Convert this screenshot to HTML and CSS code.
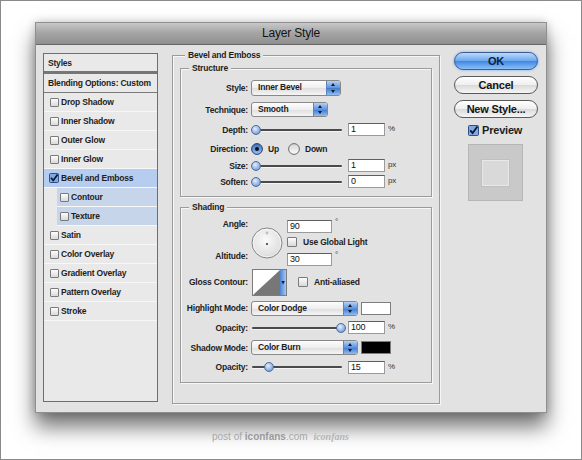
FILE: index.html
```html
<!DOCTYPE html>
<html lang="en">
<head>
  <meta charset="UTF-8" />
  <title>Layer Style</title>
  <link rel="stylesheet" href="styles.css">
</head>
<body>

<div class="frame">
  <div class="window">
    <div class="titlebar">Layer Style</div>

    <div class="content">

      <!-- effect list on the left -->
      <ul class="style-list">
        <li class="head">Styles</li>
        <li class="blend">Blending Options: Custom</li>
        <li><span class="cb"></span>Drop Shadow</li>
        <li><span class="cb"></span>Inner Shadow</li>
        <li><span class="cb"></span>Outer Glow</li>
        <li><span class="cb"></span>Inner Glow</li>
        <li class="selected">
          <svg class="cb-on" width="10" height="10" viewBox="0 0 10 10"><rect x=".5" y=".5" width="9" height="9" rx="1" fill="#7fa9e4" stroke="#2f4f85"/><path d="M2 4.8l2.2 2.6L8.6 1.4" fill="none" stroke="#0d1830" stroke-width="1.7"/></svg>Bevel and Emboss
        </li>
        <li class="sub"><span class="cb"></span>Contour</li>
        <li class="sub"><span class="cb"></span>Texture</li>
        <li><span class="cb"></span>Satin</li>
        <li><span class="cb"></span>Color Overlay</li>
        <li><span class="cb"></span>Gradient Overlay</li>
        <li><span class="cb"></span>Pattern Overlay</li>
        <li><span class="cb"></span>Stroke</li>
      </ul>

      <!-- bevel settings -->
      <div class="group outer">
        <span class="group-title">Bevel and Emboss</span>

        <div class="group structure">
          <span class="group-title inner-title">Structure</span>

          <label>Style:</label>
          <div class="ctl"><div class="select w-style"><span>Inner Bevel</span><i class="stepper"></i></div></div>

          <label>Technique:</label>
          <div class="ctl"><div class="select w-tech"><span>Smooth</span><i class="stepper"></i></div></div>

          <label>Depth:</label>
          <div class="ctl">
            <div class="slider"><i class="thumb" style="--pos:0"></i></div>
            <span class="field">1</span><span class="unit">%</span>
          </div>

          <label>Direction:</label>
          <div class="ctl">
            <svg class="radio" width="12" height="12" viewBox="0 0 12 12"><defs><linearGradient id="rOn" x1="0" y1="0" x2="0" y2="1"><stop offset="0" stop-color="#3c6db5"/><stop offset="1" stop-color="#9cc3f2"/></linearGradient></defs><circle cx="6" cy="6" r="5.4" fill="url(#rOn)" stroke="#1f3d70"/><circle cx="6" cy="6" r="2" fill="#0a1226"/></svg>
            <span class="radio-text">Up</span>
            <svg class="radio second" width="12" height="12" viewBox="0 0 12 12"><defs><linearGradient id="rOff" x1="0" y1="0" x2="0" y2="1"><stop offset="0" stop-color="#d4d4d4"/><stop offset="1" stop-color="#fbfbfb"/></linearGradient></defs><circle cx="6" cy="6" r="5.4" fill="url(#rOff)" stroke="#6c6c6c"/></svg>
            <span class="radio-text">Down</span>
          </div>

          <label>Size:</label>
          <div class="ctl">
            <div class="slider"><i class="thumb" style="--pos:0"></i></div>
            <span class="field">1</span><span class="unit">px</span>
          </div>

          <label>Soften:</label>
          <div class="ctl">
            <div class="slider"><i class="thumb" style="--pos:0"></i></div>
            <span class="field">0</span><span class="unit">px</span>
          </div>
        </div>

        <div class="group shading">
          <span class="group-title inner-title">Shading</span>

          <div class="label-stack"><label>Angle:</label><label>Altitude:</label></div>
          <div class="ctl angle-ctl">
            <svg class="dial" width="32" height="32" viewBox="0 0 32 32">
              <defs>
                <radialGradient id="dialFill" cx="0.45" cy="0.4" r="0.7"><stop offset="0" stop-color="#fafafa"/><stop offset="0.7" stop-color="#e2e2e2"/><stop offset="1" stop-color="#bdbdbd"/></radialGradient>
              </defs>
              <circle cx="16" cy="16" r="15" fill="url(#dialFill)" stroke="#858585"/>
              <circle cx="16" cy="16" r="13.8" fill="none" stroke="#ffffff" stroke-opacity=".7"/>
              <path d="M16 4.5v3M14.6 6h2.8" stroke="#b0b0b0" stroke-width="1"/>
              <circle cx="16" cy="17" r="1.1" fill="#3a3a3a"/>
            </svg>
            <div class="angle-fields">
              <div class="ctl"><span class="field wide">90</span><span class="unit deg">°</span></div>
              <div class="ctl check-line"><span class="cb big"></span>Use Global Light</div>
              <div class="ctl"><span class="field wide">30</span><span class="unit deg">°</span></div>
            </div>
          </div>

          <label>Gloss Contour:</label>
          <div class="ctl">
            <svg class="contour" width="35" height="27" viewBox="0 0 35 27">
              <defs><linearGradient id="strip" x1="0" y1="0" x2="1" y2="0"><stop offset="0" stop-color="#4a83d4"/><stop offset="1" stop-color="#a5c9f3"/></linearGradient></defs>
              <rect x=".5" y=".5" width="34" height="26" fill="#fff" stroke="#7c7c7c"/>
              <path d="M1 26L28 1V26Z" fill="#777"/>
              <rect x="28" y="1" width="6" height="25" fill="url(#strip)"/>
              <path d="M29.4 12h3.4L31.1 15.6Z" fill="#101a2e"/>
            </svg>
            <span class="cb big anti"></span><span class="check-text">Anti-aliased</span>
          </div>

          <label>Highlight Mode:</label>
          <div class="ctl">
            <div class="select w-mode"><span>Color Dodge</span><i class="stepper"></i></div>
            <span class="swatch white"></span>
          </div>

          <label>Opacity:</label>
          <div class="ctl">
            <div class="slider"><i class="thumb" style="--pos:100"></i></div>
            <span class="field">100</span><span class="unit">%</span>
          </div>

          <label>Shadow Mode:</label>
          <div class="ctl">
            <div class="select w-mode"><span>Color Burn</span><i class="stepper"></i></div>
            <span class="swatch black"></span>
          </div>

          <label>Opacity:</label>
          <div class="ctl">
            <div class="slider"><i class="thumb" style="--pos:15"></i></div>
            <span class="field">15</span><span class="unit">%</span>
          </div>
        </div>
      </div>

      <!-- dialog buttons and preview -->
      <div class="actions">
        <button class="btn primary">OK</button>
        <button class="btn">Cancel</button>
        <button class="btn">New Style...</button>
        <div class="preview-line">
          <svg width="11" height="11" viewBox="0 0 11 11"><rect x=".5" y=".5" width="10" height="10" rx="1" fill="#7fa9e4" stroke="#2f4f85"/><path d="M2.2 5.3l2.4 2.8L9.4 1.4" fill="none" stroke="#0d1830" stroke-width="1.8"/></svg>
          Preview
        </div>
        <div class="preview-box"><div class="preview-square"></div></div>
      </div>

    </div>
  </div>

  <div class="credit">post of <b>iconfans</b>.com <span class="logo">iconfans</span></div>
</div>

</body>
</html>
```

FILE: styles.css
```css
body {
  margin: 0;
  font-family: 'Liberation Sans', Arial, sans-serif;
  color: #1e1e1e;
}

.frame {
  width: 582px;
  height: 460px;
  box-sizing: border-box;
  border: 1px solid #8a8a8a;
  background: #fff;
  padding: 21px 0 0 34px;
  overflow: hidden;
}

.window {
  width: 512px;
  height: 391px;
  box-sizing: border-box;
  border: 1px solid #8f8f8f;
  background: #e2e2e2;
  box-shadow: 0 14px 20px rgba(0,0,0,0.55), 0 0 9px rgba(0,0,0,0.2);
}

.titlebar {
  height: 21px;
  line-height: 21px;
  border-bottom: 1px solid #666;
  background: linear-gradient(#c8c8c8, #a6a6a6 45%, #8f8f8f);
  text-align: center;
  font-size: 12px;
  letter-spacing: -0.2px;
  color: #141414;
}

.content {
  display: flex;
  align-items: flex-start;
  padding-left: 7px;
}

/* ---- effect list ---- */

.style-list {
  list-style: none;
  margin: 8px 0 0;
  padding: 0;
  width: 115px;
  height: 349px;
  box-sizing: border-box;
  border: 1px solid #6e6e6e;
  background: #e9e9e9;
  font-size: 8.5px;
  font-weight: bold;
  letter-spacing: -0.2px;
}

.style-list li {
  height: 18px;
  border-bottom: 1px solid #f7f7f7;
  display: flex;
  align-items: center;
  padding-left: 6px;
  white-space: nowrap;
}

.style-list .head {
  height: 17px;
  padding-left: 4px;
  border-bottom: 3px solid #767676;
}

.style-list .blend {
  padding-left: 4px;
  border-bottom: 1px solid #7a7a7a;
}

.style-list .selected {
  background: #b6cdef;
}

.style-list .sub {
  margin-left: 13px;
  padding-left: 3px;
  background: #c7d5ea;
}

.cb {
  display: inline-block;
  width: 7px;
  height: 7px;
  border: 1px solid #7a7a7a;
  border-radius: 1px;
  background: linear-gradient(#fdfdfd, #d9d9d9);
  margin-right: 2px;
  flex: none;
}

.cb.big {
  width: 8px;
  height: 8px;
}

.cb-on {
  margin-right: 2px;
  margin-left: -1px;
  flex: none;
}

/* ---- group boxes ---- */

.group {
  position: relative;
  box-sizing: border-box;
  border: 1px solid #9b9b9b;
  box-shadow: inset 1px 1px 0 #f7f7f7, 1px 1px 0 #f7f7f7;
}

.group-title {
  position: absolute;
  top: -6px;
  left: 12px;
  padding: 0 3px;
  background: #e2e2e2;
  font-size: 8.5px;
  font-weight: bold;
  line-height: 11px;
  letter-spacing: -0.2px;
}

.group-title.inner-title {
  left: 8px;
}

.outer {
  margin: 10px 0 0 14px;
  width: 268px;
  height: 349px;
  padding: 12px 7px 0;
}

.structure,
.shading {
  display: grid;
  grid-template-columns: 67px auto;
  column-gap: 3px;
  align-items: center;
}

.structure {
  height: 129px;
  padding-top: 8px;
  grid-template-rows: 22px 21px 19px 19px 15px 17px;
}

.shading {
  margin-top: 10px;
  height: 176px;
  padding-top: 11px;
  grid-template-rows: 46px 34px 18px 21px 19px 20px;
}

.structure label,
.shading label {
  text-align: right;
  font-size: 8.5px;
  font-weight: bold;
  letter-spacing: -0.2px;
  white-space: nowrap;
  color: #222;
}

.ctl {
  display: flex;
  align-items: center;
  font-size: 8.5px;
  font-weight: bold;
  letter-spacing: -0.2px;
  white-space: nowrap;
}

/* popup menus */
.select {
  display: flex;
  align-items: stretch;
  height: 15px;
  box-sizing: border-box;
  border: 1px solid #888;
  border-radius: 3px;
  background: linear-gradient(#fdfdfd, #eeeeee 50%, #dedede 51%, #f5f5f5);
  overflow: hidden;
}

.select span {
  flex: 1;
  padding-left: 6px;
  line-height: 13px;
  font-weight: bold;
}

.stepper {
  width: 13px;
  border-left: 1px solid #5e82b9;
  background: linear-gradient(#b3d1f5, #5c93dd 50%, #3f7ad0 51%, #8fbdf1);
  position: relative;
}

.stepper::before,
.stepper::after {
  content: "";
  position: absolute;
  left: 4px;
  border-left: 2.5px solid transparent;
  border-right: 2.5px solid transparent;
}

.stepper::before {
  top: 2px;
  border-bottom: 3px solid #0e1a30;
}

.stepper::after {
  bottom: 2px;
  border-top: 3px solid #0e1a30;
}

.w-style { width: 90px; height: 16px; }
.w-tech { width: 77px; }
.w-mode { width: 107px; }

/* sliders */
.slider {
  position: relative;
  width: 90px;
  height: 10px;
  margin-left: 1px;
}

.slider::before {
  content: "";
  position: absolute;
  left: 0;
  right: 0;
  top: 4px;
  height: 2px;
  border-radius: 1px;
  background: #4a4a4a;
  box-shadow: 0 1px 0 #f4f4f4;
}

.thumb {
  position: absolute;
  top: 0;
  left: calc(var(--pos) * 0.85px - 1px);
  width: 10px;
  height: 10px;
  box-sizing: border-box;
  border-radius: 50%;
  border: 1px solid #4d6c9c;
  background: radial-gradient(circle at 40% 35%, #e4efff, #8fb0de 60%, #6288c2);
}

/* text fields */
.field {
  display: inline-block;
  width: 37px;
  height: 13px;
  box-sizing: border-box;
  margin-left: 6px;
  padding-left: 2px;
  border: 1px solid #9a9a9a;
  border-top-color: #5f5f5f;
  background: #fff;
  font-size: 9px;
  font-weight: normal;
  line-height: 11px;
  color: #111;
}

.field.wide {
  width: 45px;
  margin-left: 0;
}

.unit {
  margin-left: 3px;
  margin-top: -2px;
  font-size: 8px;
  font-weight: normal;
  color: #333;
}

.unit.deg {
  align-self: flex-start;
  margin-top: -3px;
}

/* radios */
.radio-text {
  margin-left: 5px;
}

.radio.second {
  margin-left: 9px;
}

/* angle dial */
.label-stack {
  align-self: start;
  display: flex;
  flex-direction: column;
  align-items: flex-end;
  gap: 21px;
  line-height: 11px;
}

.angle-ctl {
  align-self: start;
  align-items: flex-start;
}

.dial {
  margin-top: 8px;
  flex: none;
}

.angle-fields {
  margin-left: 4px;
  margin-top: 1px;
}

.check-line {
  height: 18px;
}

.check-line .cb {
  margin-right: 6px;
}

.angle-fields .ctl + .ctl + .ctl {
  margin-top: 2px;
}

/* contour */
.contour {
  margin-left: 1px;
  flex: none;
}

.cb.anti {
  margin-left: 11px;
  margin-right: 6px;
}

/* colour swatches */
.swatch {
  display: inline-block;
  width: 30px;
  height: 13px;
  margin-left: 3px;
  box-sizing: border-box;
  border: 1px solid #7d7d7d;
}

.swatch.white { background: #fff; }
.swatch.black { background: #000; }

/* ---- buttons column ---- */

.actions {
  margin: 7px 0 0 14px;
  width: 84px;
  display: flex;
  flex-direction: column;
}

.btn {
  height: 18px;
  margin: 0 0 6px;
  padding: 0;
  border: 1px solid #5a5a5a;
  border-radius: 9px;
  background: linear-gradient(#ffffff, #eeeeee 50%, #d9d9d9 51%, #f6f6f6);
  font-family: 'Liberation Sans', Arial, sans-serif;
  font-size: 11px;
  font-weight: bold;
  letter-spacing: -0.2px;
  color: #141414;
}

.btn.primary {
  border-color: #3c5d92;
  background: linear-gradient(#bcdafb, #6aa6ec 50%, #3f86e2 51%, #8cc0f6);
  box-shadow: 0 0 2px 1px #a9c8ee;
  color: #10223f;
}

.preview-line {
  display: flex;
  align-items: center;
  gap: 3px;
  margin: -1px 0 0 14px;
  font-size: 11px;
  font-weight: bold;
  letter-spacing: -0.2px;
  height: 14px;
}

.preview-box {
  margin: 7px 0 0 14px;
  width: 55px;
  height: 57px;
  box-sizing: border-box;
  border: 1px solid #b6b6b6;
  background: #c9c9c9;
  display: flex;
  align-items: center;
  justify-content: center;
}

.preview-square {
  width: 27px;
  height: 26px;
  box-sizing: border-box;
  border: 1px solid #e8e8e8;
  background: #d9d9d9;
  box-shadow: 0 0 0 1px #c0c0c0;
}

/* ---- credit line under the dialog ---- */

.credit {
  margin: 18px 0 0 177px;
  font-size: 10px;
  line-height: 12px;
  color: #a8a8a8;
}

.credit b {
  color: #9a9a9a;
}

.credit .logo {
  margin-left: 3px;
  font-family: 'Liberation Serif', serif;
  font-style: italic;
  font-weight: bold;
  color: #b5b5b5;
}
```
